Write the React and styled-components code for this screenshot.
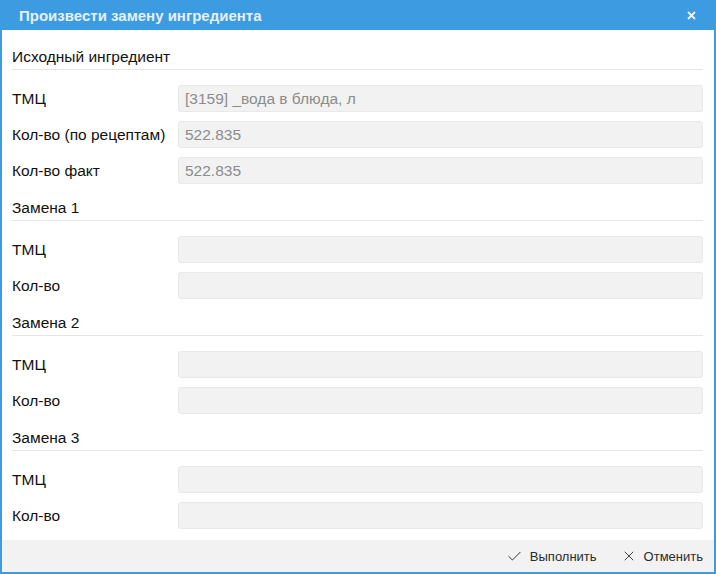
import React from "react";
import styled, { createGlobalStyle } from "styled-components";
import { Check, X } from "lucide-react";

const GlobalStyle = createGlobalStyle`
html, body {
  margin: 0;
  padding: 0;
  background: #ffffff;
}
body {
  font-family: "Liberation Sans", Arial, sans-serif;
}
`;

const Window = styled.div`
width: 716px;
height: 574px;
box-sizing: border-box;
background: #3d9be1;
padding: 0 2px 2px 2px;
display: flex;
flex-direction: column;
`;

const TitleBar = styled.div`
height: 30px;
display: flex;
align-items: center;
justify-content: space-between;
padding: 0 18px 0 17px;
`;

const Title = styled.span`
color: #e4f1fc;
font-size: 15px;
font-weight: 700;
`;

const CloseButton = styled.button`
border: none;
background: none;
padding: 0;
display: flex;
cursor: pointer;
`;

const Body = styled.div`
flex: 1;
background: #ffffff;
display: flex;
flex-direction: column;
`;

const Content = styled.div`
flex: 1;
padding: 17px 11px 0 10px;
display: flex;
flex-direction: column;
gap: 14px;
`;

const Group = styled.div`
display: flex;
flex-direction: column;
gap: 9px;
`;

const GroupTitle = styled.div`
font-size: 15.5px;
line-height: 20px;
color: #111;
padding-bottom: 2px;
border-bottom: 1px solid #e6e6e6;
margin-bottom: 6px;
`;

const Row = styled.div`
display: flex;
align-items: center;
`;

const Label = styled.div`
width: 166px;
font-size: 15.5px;
color: #111;
`;

const Field = styled.div`
flex: 1;
height: 27px;
box-sizing: border-box;
background: #f2f2f2;
border: 1px solid #e8e8e8;
border-radius: 3px;
padding: 0 6px;
display: flex;
align-items: center;
font-size: 15.5px;
color: #8c8c8c;
`;

const Footer = styled.div`
height: 32px;
background: #f2f2f2;
display: flex;
align-items: center;
justify-content: flex-end;
padding-right: 11px;
gap: 24px;
`;

const FooterButton = styled.button`
border: none;
background: none;
padding: 0;
display: flex;
align-items: center;
gap: 7px;
font-family: "Liberation Sans", Arial, sans-serif;
font-size: 13px;
color: #2b2b2b;
cursor: pointer;
`;

const groups = [
  {
    title: "Исходный ингредиент",
    rows: [
      { label: "ТМЦ", value: "[3159] _вода в блюда, л" },
      { label: "Кол-во (по рецептам)", value: "522.835" },
      { label: "Кол-во факт", value: "522.835" },
    ],
  },
  { title: "Замена 1", rows: [{ label: "ТМЦ" }, { label: "Кол-во" }] },
  { title: "Замена 2", rows: [{ label: "ТМЦ" }, { label: "Кол-во" }] },
  { title: "Замена 3", rows: [{ label: "ТМЦ" }, { label: "Кол-во" }] },
];

export default function App() {
  return (
    <>
      <GlobalStyle />
      <Window>
        <TitleBar>
          <Title>Произвести замену ингредиента</Title>
          <CloseButton>
            <svg width="9" height="9" viewBox="0 0 9 9">
              <path d="M1 1L8 8M8 1L1 8" stroke="#e8f3fd" strokeWidth="1.8" />
            </svg>
          </CloseButton>
        </TitleBar>
        <Body>
          <Content>
            {groups.map((g) => (
              <Group key={g.title}>
                <GroupTitle>{g.title}</GroupTitle>
                {g.rows.map((r) => (
                  <Row key={r.label}>
                    <Label>{r.label}</Label>
                    <Field>{r.value}</Field>
                  </Row>
                ))}
              </Group>
            ))}
          </Content>
          <Footer>
            <FooterButton>
              <Check size={17} strokeWidth={1.4} color="#333" />
              Выполнить
            </FooterButton>
            <FooterButton>
              <X size={16} strokeWidth={1.4} color="#333" />
              Отменить
            </FooterButton>
          </Footer>
        </Body>
      </Window>
    </>
  );
}
